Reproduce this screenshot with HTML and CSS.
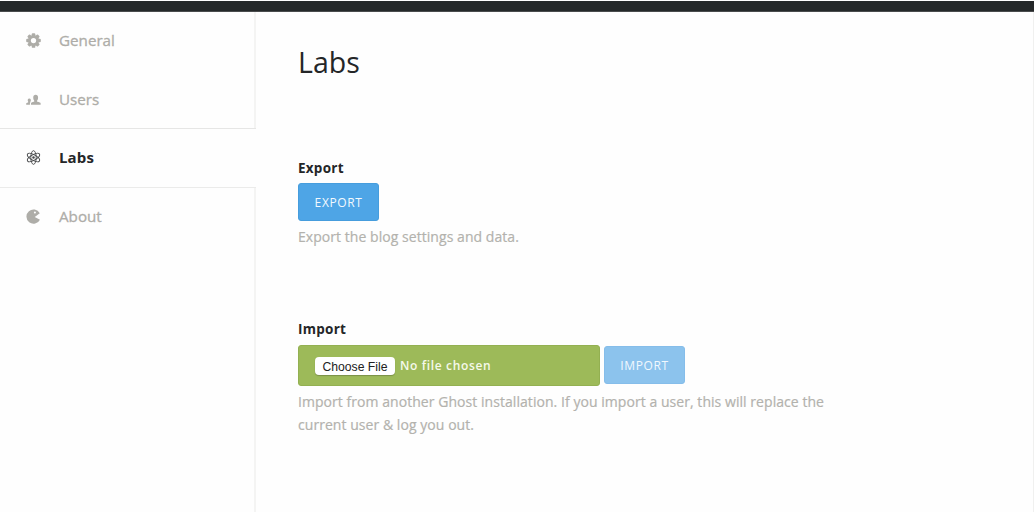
FILE: index.html
```html
<!DOCTYPE html>
<html lang="en">
<head>
<meta charset="utf-8">
<title>Labs</title>
<link rel="stylesheet" href="styles.css">
</head>
<body>
<header class="topbar"></header>
<div class="layout">
  <nav class="menu">
    <a class="item">
      <svg class="icon" viewBox="0 0 16 16"><g fill="currentColor"><g id="teeth"><rect x="6.1" y="0.2" width="3.8" height="15.6" rx="1"/><rect x="0.2" y="6.1" width="15.6" height="3.8" rx="1"/></g><use href="#teeth" transform="rotate(45 8 8)"/></g><circle cx="8" cy="8" r="4.3" fill="none" stroke="currentColor" stroke-width="3.2"/><circle cx="8" cy="8" r="2.8" fill="#fff"/></svg>
      <span>General</span>
    </a>
    <a class="item users">
      <svg class="icon" viewBox="0 0 16 16" fill="currentColor"><path d="M5.300 13.500v-1.500c0-.8 1.200-1.200 3.100-1.700.7-.3.500-.9.100-1.500-.5-.8-.8-1.700-.8-2.800 0-1.900 1-3 2.600-3s2.600 1.100 2.600 3c0 1.100-.3 2-.8 2.800-.4.600-.6 1.200.1 1.500 2 .5 3.400.9 3.400 1.700v1.500z"/><path d="M.2 13.500v-1.300c0-.6.7-.8 1.900-1.100.5-.3.300-.6.100-1C1.400 8.500 1.900 6.800 3.500 6.800s2.200 1.700 1.300 3.300c-.2.300-.3.600-.1.800-.4.300-.5.700-.5 1.100v1.500z"/></svg>
      <span>Users</span>
    </a>
    <a class="item active">
      <svg class="icon" viewBox="0 0 16 16" fill="none" stroke="currentColor" stroke-width="1"><ellipse cx="8" cy="8" rx="2.900" ry="7.300"/><ellipse cx="8" cy="8" rx="2.900" ry="7.300" transform="rotate(60 8 8)"/><ellipse cx="8" cy="8" rx="2.900" ry="7.300" transform="rotate(120 8 8)"/><circle cx="8" cy="8" r="1.300" fill="currentColor" stroke="none"/></svg>
      <span>Labs</span>
    </a>
    <a class="item">
      <svg class="icon" viewBox="0 0 16 16"><path fill="currentColor" fill-rule="evenodd" d="M14.700 4.400A7.600 7.600 0 1 0 14.900 11.400L9.300 8.600ZM9.500 2.600a1.100 1.100 0 1 1 0 2.200a1.100 1.100 0 1 1 0-2.200z"/></svg>
      <span>About</span>
    </a>
    <div class="rest"></div>
  </nav>
  <main class="content">
    <h1 class="title">Labs</h1>
    <section class="group">
      <h2 class="label">Export</h2>
      <div class="controls"><button class="btn">EXPORT</button></div>
      <p class="hint">Export the blog settings and data.</p>
    </section>
    <section class="group import">
      <h2 class="label">Import</h2>
      <div class="controls">
        <div class="file"><button class="choose">Choose File</button><span class="status">No file chosen</span></div>
        <button class="btn faded">IMPORT</button>
      </div>
      <p class="hint">Import from another Ghost installation. If you import a user, this will replace the<br>current user &amp; log you out.</p>
    </section>
  </main>
</div>
</body>
</html>
```
FILE: styles.css
```css
* { box-sizing: border-box; }
body {
  margin: 0;
  padding-top: 1px;
  height: 512px;
  overflow: hidden;
  display: flex;
  flex-direction: column;
  background: #fefefe;
  font-family: "Open Sans", sans-serif;
  color: #242628;
}
.topbar { height: 11px; flex: none; background: #242829; border-bottom: 1px solid #4a4c4d; }
.layout { display: flex; flex: 1; border-right: 1px solid #f0f0ef; }
.menu { width: 256px; display: flex; flex-direction: column; }
.item {
  flex: none;
  height: 58px;
  padding: 0 0 1px 26px;
  display: flex;
  align-items: center;
  gap: 18px;
  font-size: 15.200px;
  line-height: 21px;
  font-weight: 400;
  color: #aeada8;
  -webkit-text-stroke: 0.300px currentColor;
  border-right: 2px solid #f4f4f3;
}
.item.users { padding: 1px 0 0 26px; }
.item.active {
  height: 60px;
  color: #242628;
  font-size: 15px;
  font-weight: 700;
  letter-spacing: 0.150px;
  -webkit-text-stroke: 0;
  border-right: 0;
  border-top: 1px solid #e6e6e5;
  border-bottom: 1px solid #ebebea;
}
.item.active .icon { color: #444648; }
.icon { width: 15px; height: 15px; flex: none; }
.rest { flex: 1; border-right: 2px solid #f4f4f3; }
.content { padding: 30px 0 0 42px; }
.title { margin: 0; font-size: 28.500px; line-height: 40px; font-weight: 400; }
.group { margin-top: 76px; }
.group.import { margin-top: 71px; }
.label { margin: 0; font-size: 13.500px; line-height: 20px; font-weight: 700; letter-spacing: 0.250px; }
.controls { display: flex; align-items: flex-start; gap: 4px; margin-top: 5px; }
.import .controls { margin-top: 6px; }
.btn {
  width: 81px;
  height: 38px;
  padding: 0;
  border: 1px solid #469ddd;
  border-radius: 3px;
  background: #4ea5e6;
  color: #f2f9fe;
  font: 500 12px "Open Sans", sans-serif;
  letter-spacing: 0.600px;
}
.btn.faded { margin-top: 1px; background: #8cc3ed; border-color: #85bdea; color: #f0f8fe; }
.file {
  width: 302px;
  height: 41px;
  padding-left: 16px;
  display: flex;
  align-items: center;
  gap: 5px;
  background: #9dba59;
  border: 1px solid #93b051;
  border-radius: 3px;
}
.choose {
  width: 80px;
  height: 18px;
  padding: 2px 0 0;
  border: 0;
  border-radius: 4px;
  background: #fff;
  box-shadow: 0 1px 1px #7b9147;
  color: #222;
  font: 12.200px "Liberation Sans", sans-serif;
}
.status { color: #f5f9eb; font-size: 12px; font-weight: 600; letter-spacing: 0.650px; }
.hint {
  margin: 4px 0 0;
  font-size: 14px;
  line-height: 23px;
  letter-spacing: 0.050px;
  color: #b3b2ad;
  -webkit-text-stroke: 0.200px currentColor;
}
```
